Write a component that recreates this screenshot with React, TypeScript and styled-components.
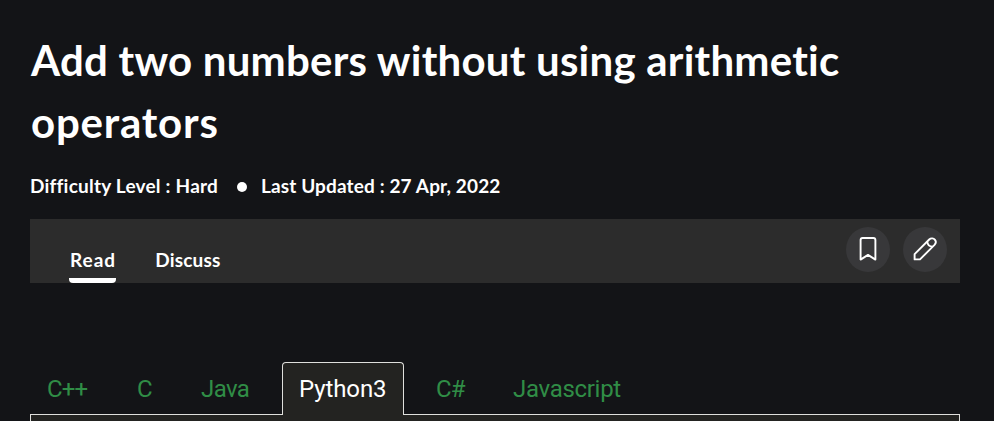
import React from "react";
import styled, { createGlobalStyle } from "styled-components";

const GlobalStyle = createGlobalStyle`
  * { box-sizing: border-box; }
  html, body { margin: 0; background: #131417; }
  body { overflow: hidden; }
`;

const Page = styled.main`
  height: 421px;
  padding: 29px 34px 0 30px;
  overflow: hidden;
  background: #131417;
  color: #fff;
  font-family: Lato, "Open Sans", sans-serif;
`;

const Title = styled.h1`
  margin: 0;
  font-size: 42px;
  font-weight: 700;
  line-height: 62px;
`;

const TitleLine = styled.span<{ $spacing: number }>`
  display: block;
  padding-left: 1px;
  white-space: nowrap;
  letter-spacing: ${(p) => p.$spacing}px;
`;

const Meta = styled.div`
  display: flex;
  align-items: center;
  height: 24px;
  margin-top: 21px;
  font-size: 19px;
  font-weight: 700;
  line-height: 24px;
  white-space: nowrap;
`;

const MetaText = styled.span<{ $width: number; $spacing: number }>`
  width: ${(p) => p.$width}px;
  letter-spacing: ${(p) => p.$spacing}px;
`;

const Dot = styled.span`
  width: 10px;
  height: 10px;
  margin: 1px 14px 0 19px;
  border-radius: 50%;
  background: #fff;
`;

const ArticleBar = styled.nav`
  display: flex;
  justify-content: space-between;
  height: 64px;
  margin-top: 21px;
  padding: 0 13px 0 39px;
  background: #2c2c2c;
`;

const Views = styled.div`
  display: flex;
  align-items: flex-end;
  gap: 38px;
`;

const View = styled.a<{ $active?: boolean; $spacing: number }>`
  height: 35px;
  padding-left: 1px;
  border-radius: 0 0 4px 4px;
  background: ${(p) =>
    p.$active ? "linear-gradient(to top, #fff 5px, transparent 5px)" : "none"};
  font-size: 19px;
  font-weight: 700;
  line-height: 24px;
  letter-spacing: ${(p) => p.$spacing}px;
`;

const Actions = styled.div`
  display: flex;
  gap: 13px;
  padding-top: 8px;
`;

const RoundButton = styled.button`
  display: grid;
  place-items: center;
  width: 44px;
  height: 45px;
  padding: 0 0 1px;
  border: 0;
  border-radius: 50%;
  background: #38383a;
`;

const TabList = styled.div`
  display: flex;
  height: 53px;
  margin: 79px 0 -1px;
`;

const Tab = styled.a<{ $width: number; $active?: boolean; $spacing: number }>`
  position: relative;
  width: ${(p) => p.$width}px;
  padding-left: 16px;
  border: 1px solid ${(p) => (p.$active ? "#e0e0dd" : "transparent")};
  border-bottom: 0;
  border-radius: 4px 4px 0 0;
  background: ${(p) => (p.$active ? "#232321" : "transparent")};
  color: ${(p) => (p.$active ? "#fff" : "#308d46")};
  font: 400 24px/52px Roboto, sans-serif;
  letter-spacing: ${(p) => p.$spacing}px;
  white-space: nowrap;

  &:nth-child(4) {
    margin-right: 15px;
  }
`;

const CodePanel = styled.section`
  height: 40px;
  border: 1px solid #e0e0dd;
  background: #232321;
`;

const tabs = [
  { name: "C++", width: 90, spacing: -0.9 },
  { name: "C", width: 64, spacing: 0 },
  { name: "Java", width: 98, spacing: -0.6 },
  { name: "Python3", width: 122, spacing: -0.1, active: true },
  { name: "C#", width: 77, spacing: -0.8 },
  { name: "Javascript", width: 140, spacing: -0.3 },
];

export default function App() {
  return (
    <>
      <GlobalStyle />
      <Page>
        <Title>
          <TitleLine $spacing={0.23}>Add two numbers without using arithmetic</TitleLine>
          <TitleLine $spacing={0.8}>operators</TitleLine>
        </Title>
        <Meta>
          <MetaText $width={188} $spacing={0.22}>Difficulty Level : Hard</MetaText>
          <Dot />
          <MetaText $width={242} $spacing={0.13}>Last Updated : 27 Apr, 2022</MetaText>
        </Meta>
        <ArticleBar>
          <Views>
            <View $active $spacing={1}>Read</View>
            <View $spacing={0.2}>Discuss</View>
          </Views>
          <Actions>
            <RoundButton aria-label="Bookmark">
              <svg width="26" height="26" viewBox="0 0 26 26" fill="none" stroke="#fff" strokeWidth="1.9" strokeLinejoin="round">
                <path d="M7.6 2h10.8c1.2 0 2 .8 2 2v19.6L13 18.9l-7.4 4.7V4c0-1.2.8-2 2-2Z" />
              </svg>
            </RoundButton>
            <RoundButton aria-label="Edit">
              <svg width="26" height="26" viewBox="0 0 26 26" fill="none" stroke="#fff" strokeWidth="1.9" strokeLinejoin="round">
                <path d="M2.6 18.2 17.2 3.5c1.9-1.9 4.5-1.2 5.6.1 1.1 1.3 1.3 3.6-.3 5.3L8 23.4H2.6Z" />
                <path d="M15.2 5.5c.3 2.9 2.6 5.1 5.4 5.3" />
              </svg>
            </RoundButton>
          </Actions>
        </ArticleBar>
        <TabList>
          {tabs.map((t) => (
            <Tab key={t.name} $width={t.width} $active={t.active} $spacing={t.spacing}>
              {t.name}
            </Tab>
          ))}
        </TabList>
        <CodePanel />
      </Page>
    </>
  );
}
